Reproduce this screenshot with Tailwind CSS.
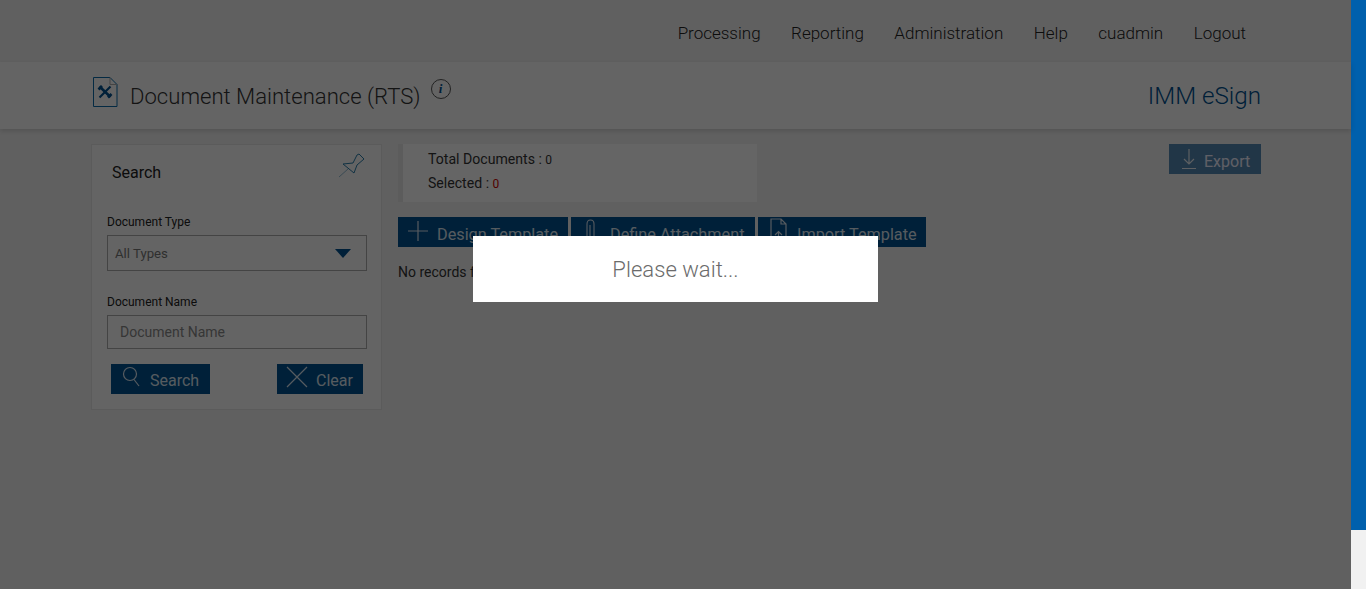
<!DOCTYPE html>
<html><head><meta charset="utf-8"><script src="https://cdn.jsdelivr.net/npm/@tailwindcss/browser@4"></script></head>
<body class="m-0 overflow-hidden font-['Roboto',sans-serif]">
<div class="relative h-[589px] w-[1366px] flex bg-[#f1f1f1]">
  <div class="relative w-[1351px] h-[589px] bg-[#f0f0f0] shrink-0">
    <nav class="h-[62px] flex items-center justify-end gap-[30.500px] pr-[105px] pt-[6px] text-[17px] font-light text-[#222]">
      <span>Processing</span><span>Reporting</span><span>Administration</span><span>Help</span><span>cuadmin</span><span>Logout</span>
    </nav>
    <header class="h-[67px] bg-[#fbfbfb] shadow-[0_2px_5px_rgba(0,0,0,0.15)] flex items-center pl-[93px] pr-[90px]">
      <svg class="w-[25px] h-[30px] mb-[7px]" viewBox="0 0 25 30" fill="none"><path d="M.5.500H17L24 7.500V29.500H.5Z" fill="#fbfbfb" stroke="#0a6aa8"/><path d="M17 .5V7.500H24" stroke="#aaa"/><path d="M6.500 9.500L17.500 20" stroke="#00508f" stroke-width="2.600"/><path d="M6.500 20.500L17.500 9.500" stroke="#00508f" stroke-width="2.200"/><path d="M5.500 12.500L9 9" stroke="#00508f" stroke-width="2.600"/><path d="M15 20.500L18.500 17" stroke="#00508f" stroke-width="2.600"/></svg>
      <span class="ml-[12px] pt-[2px] text-[22.100px] font-light text-[#333]">Document Maintenance (RTS)</span>
      <span class="ml-[10px] mb-[13px] w-[20px] h-[20px] rounded-full border border-[#555] flex items-center justify-center font-['Liberation_Serif',serif] italic font-bold text-[13px] text-[#00508f]">i</span>
      <span class="ml-auto pt-[2px] text-[24.200px] font-light text-[#00508f]">IMM eSign</span>
    </header>
    <main class="flex pl-[91px] pr-[90px] pt-[15px]">
      <section class="relative w-[291px] h-[266px] shrink-0 bg-[#fafafa] border border-[#e4e4e4] pl-[15px] pr-[14px]">
        <h2 class="mt-[18px] ml-[5px] text-[16px] leading-[19px] text-[#222]">Search</h2>
        <svg class="absolute top-[7px] right-[16px] w-[26px] h-[26px]" viewBox="0 0 26 26" fill="none" stroke="#2a7ca8"><path d="M4 12L14 11L18 3L20 2L25 7L18 13L15 21Z"/><path d="M0 25L9 17" stroke-opacity=".5"/></svg>
        <label class="block mt-[33px] text-[12px] leading-[14px] text-[#222]">Document Type</label>
        <div class="mt-[6px] h-[36px] border border-[#aaa] flex items-center justify-between pl-[7px] pr-[15px] pt-[1px] text-[13.200px] text-[#777]">All Types
          <span class="w-0 h-0 border-x-[8px] border-x-transparent border-t-[9px] border-t-[#00508f]"></span></div>
        <label class="block mt-[24px] text-[12px] leading-[14px] text-[#222]">Document Name</label>
        <div class="mt-[6px] h-[34px] border border-[#aaa] flex items-center pl-[12px] pt-[1px] text-[14px] text-[#888]">Document Name</div>
        <div class="flex justify-between mt-[15px] px-[4px]">
          <button class="h-[30px] w-[99px] bg-[#00508f] text-[#d8e4ee] text-[16px] flex items-center pl-[11px]">
            <svg class="w-[18px] h-[22px] mb-[4px]" viewBox="0 0 18 22" fill="none" stroke="#d8e4ee" stroke-width="1.200"><circle cx="8" cy="8" r="6.500"/><path d="M12 13.500L17 20"/></svg><span class="ml-[10px] mt-[4px]">Search</span></button>
          <button class="h-[30px] w-[86px] bg-[#00508f] text-[#d8e4ee] text-[16px] flex items-center pl-[9px]">
            <svg class="w-[22px] h-[22px] mb-[4px]" viewBox="0 0 22 22" stroke="#d8e4ee" stroke-width="1.200"><path d="M1 1L21 21M21 1L1 21"/></svg><span class="ml-[8px] mt-[4px]">Clear</span></button>
        </div>
      </section>
      <div class="flex-1 ml-[16px] min-w-0">
        <div class="flex justify-between items-start">
          <div class="w-[359px] h-[58px] bg-[#fcfcfc] border-l-[5px] border-[#e6e6e6] pl-[25px] pt-[3px] text-[14.100px] leading-[24px] text-[#333]">
            <div>Total Documents : <span class="text-[12px]">0</span></div>
            <div class="-mt-[1px]">Selected : <span class="text-[12px] text-[#c00]">0</span></div>
          </div>
          <button class="h-[30px] w-[92px] bg-[#00508f]/65 text-[#eef] text-[16px] flex items-center pl-[12px]">
            <svg class="w-[16px] h-[22px]" viewBox="0 0 16 22" fill="none" stroke="#e8eef4" stroke-width="1.200"><path d="M8 1V16M3 11L8 16L13 11M1 20.500H15"/></svg><span class="ml-[7px] mt-[6px]">Export</span></button>
        </div>
        <div class="flex gap-[3px] mt-[15px] text-[16.250px] text-[#d8e4ee]">
          <button class="h-[30px] w-[170px] bg-[#00508f] flex items-center pl-[9px]">
            <svg class="w-[22px] h-[22px] mb-[3px]" viewBox="0 0 22 22" stroke="#d8e4ee" stroke-width="1.200"><path d="M11 1V21M1 11H21"/></svg><span class="ml-[8px] mt-[6px]">Design Template</span></button>
          <button class="h-[30px] w-[184px] bg-[#00508f] flex items-center pl-[13px]">
            <svg class="w-[14px] h-[24px] mb-[4px]" viewBox="0 0 14 24" fill="none" stroke="#d8e4ee" stroke-width="1.100"><path d="M3 22V6Q3 2 6.500 2Q10 2 10 6V21Q10 23 8 23Q6 23 6 21V7"/></svg><span class="ml-[12px] mt-[6px]">Define Attachment</span></button>
          <button class="h-[30px] w-[168px] bg-[#00508f] flex items-center pl-[12px]">
            <svg class="w-[17px] h-[24px] mb-[4px]" viewBox="0 0 17 24" fill="none" stroke="#d8e4ee" stroke-width="1.200"><path d="M1 23V1H11L16 6V23M11 1V6H16M8.500 23V14M5 17L8.500 13.500L12 17"/></svg><span class="ml-[10px] mt-[6px]">Import Template</span></button>
        </div>
        <p class="mt-[16px] text-[14px] leading-[18px] text-[#333]">No records found</p>
      </div>
    </main>
    <div class="absolute inset-0 bg-black/60"></div>
    <div class="absolute left-[473px] top-[236px] w-[405px] h-[66px] bg-white flex items-center justify-center pt-[2px] text-[22.100px] font-light text-[#6b6b6b]">Please wait...</div>
  </div>
  <div class="w-[15px] h-[530px] bg-[#0060ad] shrink-0"></div>
</div>
</body></html>
